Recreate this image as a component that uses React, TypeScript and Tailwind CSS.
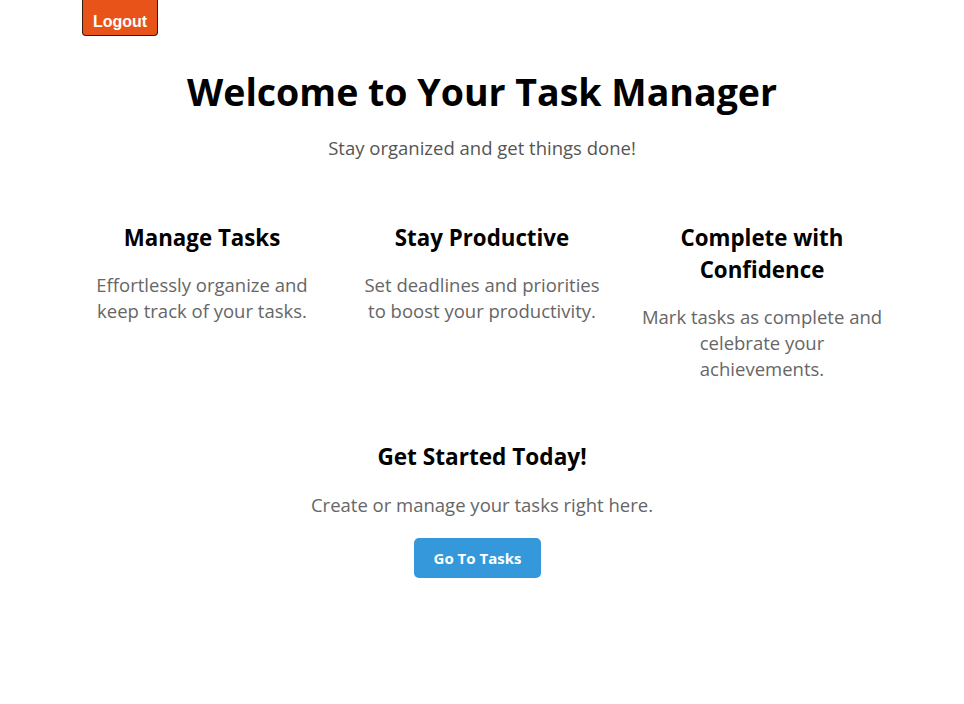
const features = [
  {
    title: "Manage Tasks",
    text: "Effortlessly organize and keep track of your tasks.",
  },
  {
    title: "Stay Productive",
    text: "Set deadlines and priorities to boost your productivity.",
  },
  {
    title: "Complete with Confidence",
    text: "Mark tasks as complete and celebrate your achievements.",
  },
];

export default function App() {
  return (
    <div className="min-h-screen bg-white font-['Open_Sans',sans-serif]">
      <div className="mx-auto w-[800px]">
        <button className="flex h-[36px] w-[76px] items-center justify-center rounded-b-[4px] border border-t-0 border-[#3a1a0a] bg-[#e8531a] pt-[8px] font-['Liberation_Sans',Arial,sans-serif] text-[16px] font-bold text-white">
          Logout
        </button>

        <div className="text-center">
          <h1 className="mt-[33px] text-[37.5px] font-bold leading-[46px] text-black">
            Welcome to Your Task Manager
          </h1>
          <p className="mt-[20px] text-[18.5px] leading-[26px] text-[#555]">
            Stay organized and get things done!
          </p>
        </div>

        <div className="-mx-[5px] mt-[61px] grid grid-cols-[250px_250px_250px] gap-[30px] text-center">
          {features.map((f) => (
            <div key={f.title}>
              <h3 className="px-[20px] text-[22.3px] font-bold leading-[32px] text-black">
                {f.title}
              </h3>
              <p className="mt-[18px] text-[18.5px] leading-[26px] text-[#666]">
                {f.text}
              </p>
            </div>
          ))}
        </div>

        <div className="mt-[59px] text-center">
          <h2 className="text-[22.6px] font-bold leading-[32px] text-black">
            Get Started Today!
          </h2>
          <p className="mt-[19px] text-[18.5px] leading-[26px] text-[#666]">
            Create or manage your tasks right here.
          </p>
          <button className="-ml-[9px] mt-[20px] h-[40px] w-[127px] rounded-[5px] bg-[#3498db] text-[15px] font-bold text-white">
            Go To Tasks
          </button>
        </div>
      </div>
    </div>
  );
}
